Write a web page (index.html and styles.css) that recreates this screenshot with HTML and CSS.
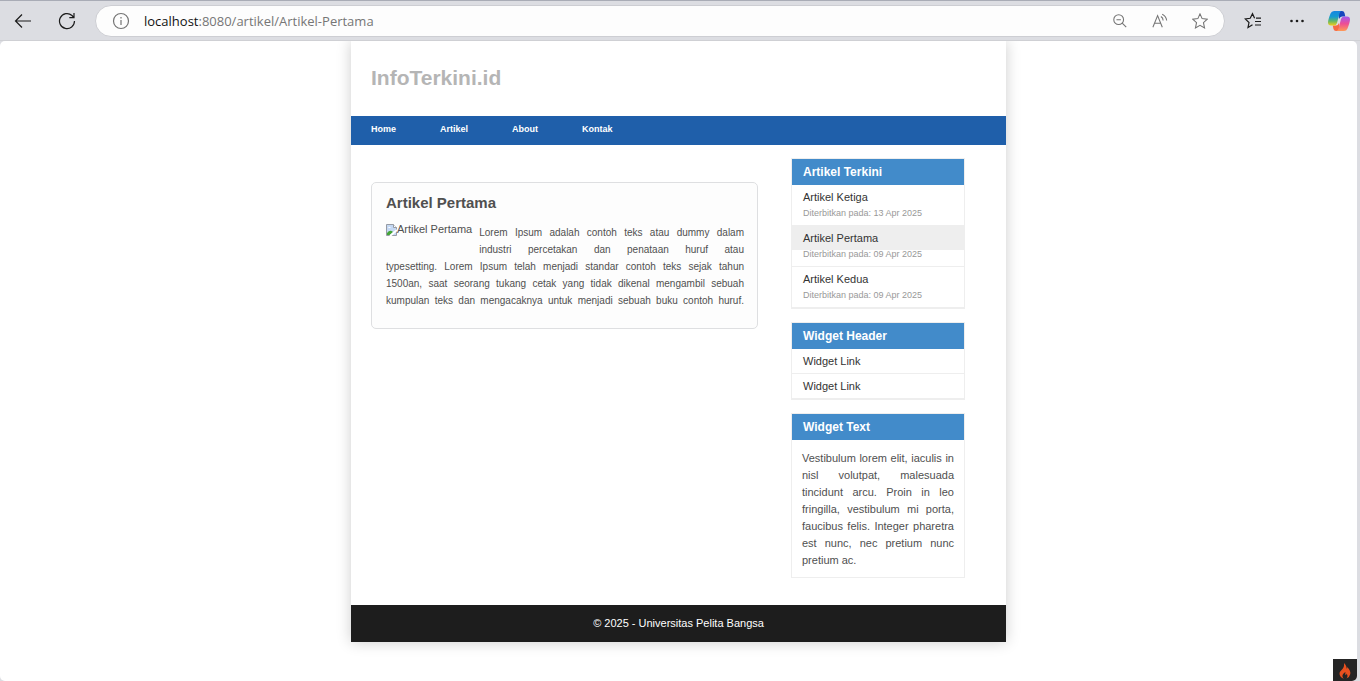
FILE: index.html
```html
<!DOCTYPE html>
<html lang="id">
<head>
<meta charset="utf-8">
<title>InfoTerkini.id</title>
<link rel="stylesheet" href="styles.css">
</head>
<body>
<div class="toolbar">
  <button class="tool" type="button" aria-label="Back"><svg width="18" height="18" viewBox="0 0 18 18"><path d="M17 9H1.500M8 2.500L1.500 9L8 15.500"/></svg></button>
  <button class="tool reload" type="button" aria-label="Reload"><svg width="18" height="18" viewBox="0 0 18 18"><path d="M16.500 9A7.500 7.500 0 1 1 14 3.500L15.800 5.500M16 1V5.700H11.300"/></svg></button>
  <div class="address">
    <svg class="info" width="18" height="18" viewBox="0 0 18 18"><circle cx="9" cy="9" r="7.500"/><path d="M9 8V13M9 5V6.500"/></svg>
    <a class="url" href="#"><span class="host">localhost</span>:8080/artikel/Artikel-Pertama</a>
    <button class="tool muted" type="button" aria-label="Zoom"><svg width="16" height="16" viewBox="0 0 18 18"><circle cx="7.500" cy="7.500" r="5.500"/><path d="M11.500 11.500L16 16M5 7.500H10"/></svg></button>
    <button class="tool muted" type="button" aria-label="Read aloud"><svg width="16" height="16" viewBox="0 0 18 18"><path d="M1 16L6.300 3L11.600 16M2.800 11.500H9.800M10 4A5 5 0 0 1 12.500 8.500M11.500 1.500A9 9 0 0 1 16.500 8.500"/></svg></button>
    <button class="tool muted" type="button" aria-label="Favorite"><svg width="16" height="16" viewBox="0 0 18 18"><path d="M9 1L11.400 6.300L17.200 7L12.900 10.900L14.100 16.700L9 13.800L3.900 16.700L5.100 10.900L.8 7L6.600 6.300Z"/></svg></button>
  </div>
  <button class="tool" type="button" aria-label="Favorites list"><svg width="18" height="18" viewBox="0 0 18 18"><path d="M11 13H17M11 9.500H17M12 6.200H17M8.500 12.700L4 15.500L5 10.500L1.200 6.900L6.200 6.300L8.500 1.700L10.600 6.200"/></svg></button>
  <button class="tool" type="button" aria-label="More"><svg width="18" height="18" viewBox="0 0 18 18"><g class="dots"><circle cx="3.500" cy="9" r="1.300"/><circle cx="9" cy="9" r="1.300"/><circle cx="14.500" cy="9" r="1.300"/></g></svg></button>
  <button class="tool copilot" type="button" aria-label="Copilot"><svg width="22" height="20" viewBox="0 0 22 20">
    <defs>
      <linearGradient id="cool" x1="0" y1="0" x2="0" y2="1"><stop offset="0" stop-color="#1686e0"/><stop offset=".4" stop-color="#159bd2"/><stop offset=".7" stop-color="#66b866"/><stop offset="1" stop-color="#f2cf18"/></linearGradient>
      <linearGradient id="warm" x1="0" y1="0" x2="0" y2="1"><stop offset="0" stop-color="#a45bee"/><stop offset=".5" stop-color="#ee4e94"/><stop offset="1" stop-color="#ff9a55"/></linearGradient>
    </defs>
    <path fill="#1746bd" d="M10 0H14Q16 0 16.500 2L17.300 5.500H14Q12 5.500 11 8Z"/>
    <path fill="#f66a45" d="M12 20H8Q6 20 5.500 18L4.700 14.500H8Q10 14.500 11 12Z"/>
    <path fill="url(#cool)" d="M6 0H13.500Q12 0 11.300 3L9 12Q8.300 14.500 6 14.500H3Q0 14.500 0 11.500Q0 9 2.500 2.500Q3.500 0 6 0Z"/>
    <path fill="url(#warm)" d="M16 20H8.500Q10 20 10.700 17L13 8Q13.700 5.500 16 5.500H19Q22 5.500 22 8.500Q22 11 19.500 17.500Q18.500 20 16 20Z"/>
  </svg></button>
</div>
<div class="viewport">
  <div class="container">
    <header class="masthead"><h1>InfoTerkini.id</h1></header>
    <nav class="menu">
      <a href="#">Home</a><a href="#">Artikel</a><a href="#">About</a><a href="#">Kontak</a>
    </nav>
    <div class="content">
      <main class="main">
        <article class="entry">
          <h2>Artikel Pertama</h2>
          <span class="thumb"><svg width="11" height="12" viewBox="0 0 11 12"><path fill="#c4d8f4" stroke="#979ca5" d="M.5 .5H7.500L10.500 3.500V11.500H.5Z"/><path fill="#fff" stroke="#979ca5" d="M7.500 .5V3.500H10.500"/><path fill="#fff" d="M2 4Q3 2 5 4Z"/><path fill="#45a536" d="M1 11V9Q4 5 7 8L4 11Z"/><path stroke="#fff" stroke-width="2" d="M4 12L11 6"/></svg>Artikel Pertama</span>
          <p>Lorem Ipsum adalah contoh teks atau dummy dalam<br>industri percetakan dan penataan huruf atau<br>typesetting. Lorem Ipsum telah menjadi standar contoh teks sejak tahun<br>1500an, saat seorang tukang cetak yang tidak dikenal mengambil sebuah<br>kumpulan teks dan mengacaknya untuk menjadi sebuah buku contoh huruf.</p>
        </article>
      </main>
      <aside class="sidebar">
        <section class="widget">
          <h3>Artikel Terkini</h3>
          <ul>
            <li><a href="#">Artikel Ketiga</a><small>Diterbitkan pada: 13 Apr 2025</small></li>
            <li><a class="active" href="#">Artikel Pertama</a><small>Diterbitkan pada: 09 Apr 2025</small></li>
            <li><a href="#">Artikel Kedua</a><small>Diterbitkan pada: 09 Apr 2025</small></li>
          </ul>
        </section>
        <section class="widget">
          <h3>Widget Header</h3>
          <ul>
            <li><a href="#">Widget Link</a></li>
            <li><a href="#">Widget Link</a></li>
          </ul>
        </section>
        <section class="widget">
          <h3>Widget Text</h3>
          <p>Vestibulum lorem elit, iaculis in nisl volutpat, malesuada tincidunt arcu. Proin in leo fringilla, vestibulum mi porta, faucibus felis. Integer pharetra est nunc, nec pretium nunc pretium ac.</p>
        </section>
      </aside>
    </div>
    <footer class="footer">© 2025 - Universitas Pelita Bangsa</footer>
  </div>
  <button class="debug" type="button" aria-label="Debug toolbar"><svg width="12" height="16" viewBox="0 0 12 16"><path fill="#e8501f" d="M5 0Q8 3 7.500 5.500Q8.500 5.500 8.300 4Q12 8 11.300 11Q10.500 14.500 7.500 15.500Q9.500 13 7.500 10.500Q7.500 12 6.500 12Q6 11 6.500 9Q3 11 3.500 13.500Q3.700 14.800 5 15.800Q1 14.500 .5 11Q.5 8.500 3 6.500Q5.500 4 5 0Z"/></svg></button>
</div>
</body>
</html>
```
FILE: styles.css
```css
* { box-sizing: border-box; }

body {
  margin: 0;
  min-height: 100vh;
  display: flex;
  flex-direction: column;
  background: #dcdde2;
  color: #505050;
  font-family: "Liberation Sans", Arial, sans-serif;
  font-size: 11px;
  line-height: 17px;
}

h1, h2, h3, p, ul { margin: 0; padding: 0; }
a { text-decoration: none; }

/* Browser toolbar */
.toolbar {
  display: flex;
  align-items: center;
  height: 41px;
  padding: 0 10px 0 14px;
  border-top: 1px solid #a9acb6;
  border-bottom: 1px solid #cfd0d4;
}
.tool {
  display: flex;
  flex: none;
  padding: 0;
  border: 0;
  background: none;
}
.tool svg, .info { fill: none; stroke: #1b1b1b; stroke-width: 1.2; }
.tool .dots { fill: #1b1b1b; stroke: none; }
.tool.copilot svg { stroke: none; }
.tool.muted svg, .info { stroke: #747474; }
.reload { margin-left: 26px; }
.address {
  display: flex;
  flex: 1;
  align-items: center;
  gap: 24px;
  height: 32px;
  margin: 0 19px;
  padding: 0 16px;
  border: 1px solid #cdced3;
  border-radius: 16px;
  background: #fdfdfd;
}
.info { flex: none; }
.url {
  flex: 1;
  margin-left: -10px;
  padding-top: 2px;
  color: #767676;
  font-family: "Open Sans", "Noto Sans", sans-serif;
  font-size: 13px;
}
.host { color: #111; }
.address ~ .tool + .tool { margin-left: 26px; }
.address ~ .tool.copilot { margin-left: 22px; }

/* Page area */
.viewport {
  position: relative;
  flex: 1;
  margin-right: 3px;
  border-radius: 5px;
  background: #fff;
  overflow: hidden;
}
.container {
  max-width: 655px;
  margin: 0 auto;
  background: #fff;
  box-shadow: 0 0 14px rgba(0, 0, 0, .2);
}
.masthead { padding: 22px 20px 23px; }
.masthead h1 {
  color: #b5b5b5;
  font-size: 21px;
  line-height: 30px;
}
.menu {
  display: flex;
  gap: 44px;
  padding: 3px 20px 5px;
  background: #1f5faa;
}
.menu a {
  color: #fff;
  font-size: 9px;
  font-weight: 700;
  line-height: 21px;
}
.content {
  display: flex;
  gap: 33px;
  padding: 13px 41px 27px 20px;
}
.main { flex: 1; padding-top: 24px; }
.entry {
  padding: 11px 13px 19px 14px;
  border: 1px solid #dedfe1;
  border-radius: 5px;
  background: #fdfdfd;
}
.entry h2 {
  margin-bottom: 12px;
  font-size: 15px;
  line-height: 18px;
}
.entry p {
  font-size: 10px;
  text-align: justify;
  text-align-last: justify;
}
.thumb {
  display: flex;
  float: left;
  margin: 0 7px 8px 0;
  line-height: 11px;
}
.thumb svg { fill: none; }

/* Sidebar */
.sidebar {
  display: flex;
  flex: none;
  flex-direction: column;
  gap: 13px;
  width: 174px;
}
.widget { border: 1px solid #eee; }
.widget h3 {
  padding: 0 11px;
  background: #428bca;
  color: #fff;
  font-size: 12px;
  line-height: 26px;
}
.widget ul { list-style: none; }
.widget li { border-bottom: 1px solid #eee; }
.widget li a {
  display: block;
  padding: 0 11px;
  color: #333;
  line-height: 24px;
}
.widget li a.active { background: #eee; }
.widget small {
  display: block;
  padding: 0 11px 8px;
  color: #999;
  font-size: 9px;
  line-height: 8px;
}
.widget p {
  padding: 10px 10px 8px;
  text-align: justify;
}

.footer {
  padding: 10px 20px;
  background: #1d1d1d;
  color: #fff;
  text-align: center;
}
.debug {
  position: absolute;
  right: 0;
  bottom: 0;
  padding: 4px 6px 2px;
  border: 0;
  background: #252525;
  line-height: 0;
}
```
